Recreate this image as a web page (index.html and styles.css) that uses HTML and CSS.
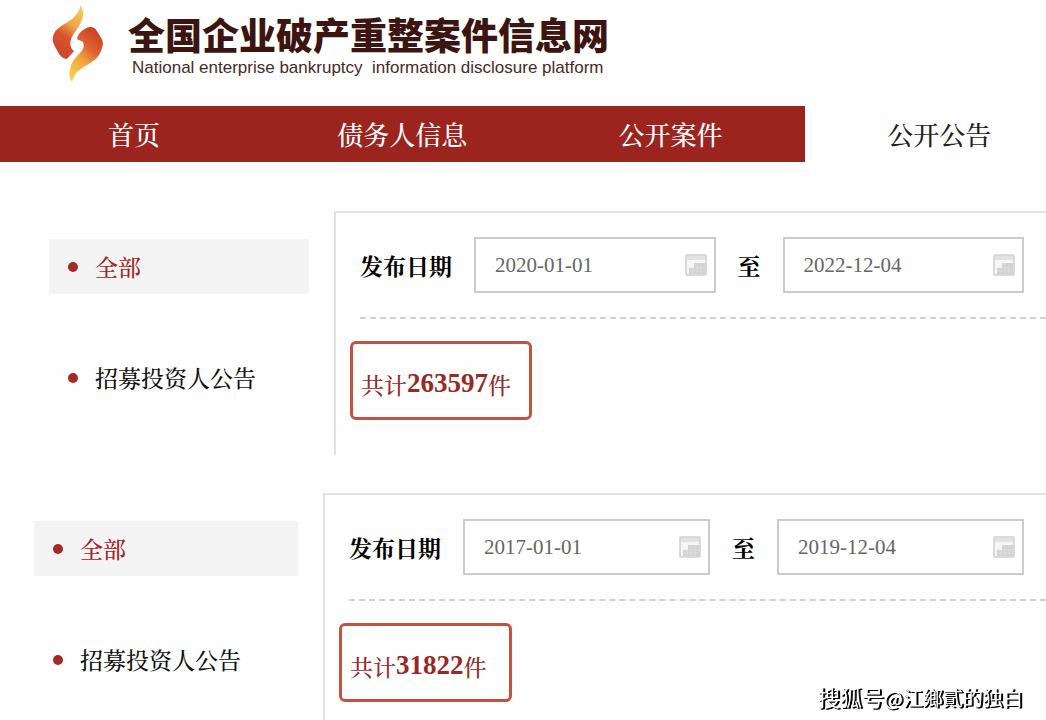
FILE: index.html
```
<!DOCTYPE html>
<html lang="zh-CN">
<head>
<meta charset="UTF-8">
<meta name="viewport" content="width=device-width, initial-scale=1.0">
<title>全国企业破产重整案件信息网</title>
<link rel="stylesheet" href="styles.css">
</head>
<body>
<svg class="defs" width="0" height="0" aria-hidden="true">
  <symbol id="calendar" viewBox="0 0 22 22">
    <rect x="1" y="1" width="20" height="20" rx="1" fill="#f6f6f6" stroke="#cfcfcf" stroke-width="1.5"/>
    <path d="M2 2h18v4H2z" fill="#e2e2e2"/>
    <path d="M9 9h11v11H4v-6h5z" fill="#d2d2d2"/>
    <path d="M4 14h16M4 17h16M8 14v6M12 9v11M16 9v11" stroke="#e4e4e4" stroke-width="0.6"/>
  </symbol>
</svg>
<header class="header">
  <svg class="logo" viewBox="0 0 52 80" aria-hidden="true">
    <defs>
      <linearGradient id="flameTop" x1="0.7" y1="0" x2="0.3" y2="1">
        <stop offset="0" stop-color="#f3cb50"/>
        <stop offset="0.35" stop-color="#eda548"/>
        <stop offset="0.6" stop-color="#d9532b"/>
        <stop offset="1" stop-color="#c9452c"/>
      </linearGradient>
      <linearGradient id="flameBottom" x1="0.7" y1="0" x2="0.2" y2="1">
        <stop offset="0" stop-color="#c9401f"/>
        <stop offset="0.35" stop-color="#dd6332"/>
        <stop offset="0.6" stop-color="#f0a43c"/>
        <stop offset="1" stop-color="#f6d04b"/>
      </linearGradient>
    </defs>
    <path d="M29 1C33 6 33 12 30 18C28 24 23 28 21 33C19 37 18 43 23 47L16 55C12 55 8 51 6 46C3 41 1 37 2 33C3 28 5 26 9 23C14 19 20 17 23 13C27 9 29 6 29 1Z" fill="url(#flameTop)"/>
    <path d="M26 35C27 29 33 24 39 23C43 23 45 25 47 29C49 32 52 36 52 40C51 44 50 48 48 51C45 56 40 58 36 61C31 64 28 66 26 68C23 71 22 74 21 78C18 74 18 70 19 66C20 58 24 54 29 49C32 46 34 42 32 38C30 36 28 37 26 35Z" fill="url(#flameBottom)"/>
  </svg>
  <div class="brand">
    <h1 class="brand-name">全国企业破产重整案件信息网</h1>
    <p class="brand-sub">National enterprise bankruptcy  information disclosure platform</p>
  </div>
</header>

<nav class="nav">
  <a href="#">首页</a>
  <a href="#">债务人信息</a>
  <a href="#">公开案件</a>
  <a href="#" class="active">公开公告</a>
</nav>

<main>
  <section class="block">
    <div class="side">
      <a href="#" class="side-item selected">全部</a>
      <a href="#" class="side-item">招募投资人公告</a>
    </div>
    <div class="panel">
      <div class="filter">
        <label for="from1">发布日期</label>
        <div class="date-box">
          <input type="text" id="from1" value="2020-01-01">
          <svg class="cal"><use href="#calendar"/></svg>
        </div>
        <label for="to1">至</label>
        <div class="date-box">
          <input type="text" id="to1" value="2022-12-04">
          <svg class="cal"><use href="#calendar"/></svg>
        </div>
      </div>
      <p class="total">共计<strong>263597</strong>件</p>
    </div>
  </section>

  <section class="block block-wide">
    <div class="side">
      <a href="#" class="side-item selected">全部</a>
      <a href="#" class="side-item">招募投资人公告</a>
    </div>
    <div class="panel">
      <div class="filter">
        <label for="from2">发布日期</label>
        <div class="date-box">
          <input type="text" id="from2" value="2017-01-01">
          <svg class="cal"><use href="#calendar"/></svg>
        </div>
        <label for="to2">至</label>
        <div class="date-box">
          <input type="text" id="to2" value="2019-12-04">
          <svg class="cal"><use href="#calendar"/></svg>
        </div>
      </div>
      <p class="total">共计<strong>31822</strong>件</p>
    </div>
  </section>
</main>

<div class="watermark"><span>搜狐号</span>@江鄉貳的独白</div>
</body>
</html>
```
FILE: styles.css
```
* {
  box-sizing: border-box;
}

body {
  margin: 0;
  background: #fefefe;
  color: #111;
  font-family: "Liberation Serif", "Noto Serif CJK SC", "Noto Sans CJK SC", serif;
  overflow-x: hidden;
}

a {
  color: inherit;
  text-decoration: none;
}

.defs {
  position: absolute;
}

/* header */
.header {
  display: flex;
  height: 106px;
  padding: 4px 0 0 51px;
}

.logo {
  width: 52px;
  height: 80px;
}

.brand {
  margin-left: 25px;
  padding-top: 14px;
}

.brand-name {
  margin: 0;
  font: 900 37px/40px "Liberation Sans", "Noto Sans CJK SC", sans-serif;
  color: #3c1510;
  white-space: nowrap;
}

.brand-sub {
  margin: 0;
  padding-left: 4px;
  font: 17px/20px "Liberation Sans", sans-serif;
  color: #4a2a26;
  white-space: pre;
}

/* main menu */
.nav {
  display: grid;
  grid-template-columns: repeat(3, 10fr) 9fr;
}

.nav a {
  height: 56px;
  padding-top: 6px;
  background: #9b241f;
  color: #fff;
  font-size: 26px;
  font-weight: 500;
  line-height: 50px;
  text-align: center;
  white-space: nowrap;
}

.nav .active {
  padding-left: 28px;
  background: #fefefe;
  color: #222;
}

/* sections */
.block {
  display: flex;
  height: 244px;
  margin-top: 49px;
  padding-left: 49px;
}

.block-wide {
  margin-top: 38px;
  padding-left: 34px;
}

.side {
  width: 260px;
  margin-right: 25px;
  padding-top: 28px;
}

.block-wide .side {
  width: 264px;
}

.side-item {
  display: flex;
  align-items: center;
  height: 55px;
  margin-bottom: 56px;
  padding-left: 19px;
  font-size: 23px;
  font-weight: 500;
  white-space: nowrap;
}

.side-item::before {
  content: "";
  width: 10px;
  height: 10px;
  margin-right: 17px;
  border-radius: 50%;
  background: #a52a26;
}

.selected {
  background: #f4f4f4;
  color: #a32420;
}

.panel {
  flex: 1;
  min-width: 0;
  padding: 24px 0 0 24px;
  border-top: 2px solid #e2e2e2;
  border-left: 2px solid #e2e2e2;
}

.filter {
  display: flex;
  align-items: center;
  gap: 22px;
  padding: 0 22px 24px 0;
  border-bottom: 2px dashed #d2d2d2;
}

.filter label {
  font-size: 23px;
  font-weight: bold;
  color: #000;
  white-space: nowrap;
}

.date-box {
  display: flex;
  flex: 1;
  align-items: center;
  min-width: 0;
  height: 56px;
  padding: 0 7px 0 19px;
  border: 2px solid #ccc;
  background: #fff;
}

.date-box input {
  flex: 1;
  min-width: 0;
  padding: 0;
  border: 0;
  outline: 0;
  background: none;
  color: #666;
  font: 21px "Liberation Serif", serif;
}

.cal {
  width: 22px;
  height: 22px;
}

.total {
  display: inline-block;
  margin: 22px 0 0 -10px;
  padding: 13px 18px 0 8px;
  height: 79px;
  border: 3px solid #c4523f;
  border-radius: 6px;
  color: #962a28;
  font-size: 23px;
  font-weight: 500;
  line-height: 60px;
  white-space: nowrap;
}

.block-wide .total {
  padding-right: 22px;
}

.total strong {
  font-size: 27px;
  line-height: 30px;
  vertical-align: 2px;
}

.watermark {
  position: fixed;
  right: 23px;
  bottom: 8px;
  color: #fff;
  font: 20px/28px "Noto Sans CJK SC", sans-serif;
  text-shadow: 1px 1px 0 #000, 2px 1px 0 #000;
}

.watermark span {
  font-size: 22px;
}
```
